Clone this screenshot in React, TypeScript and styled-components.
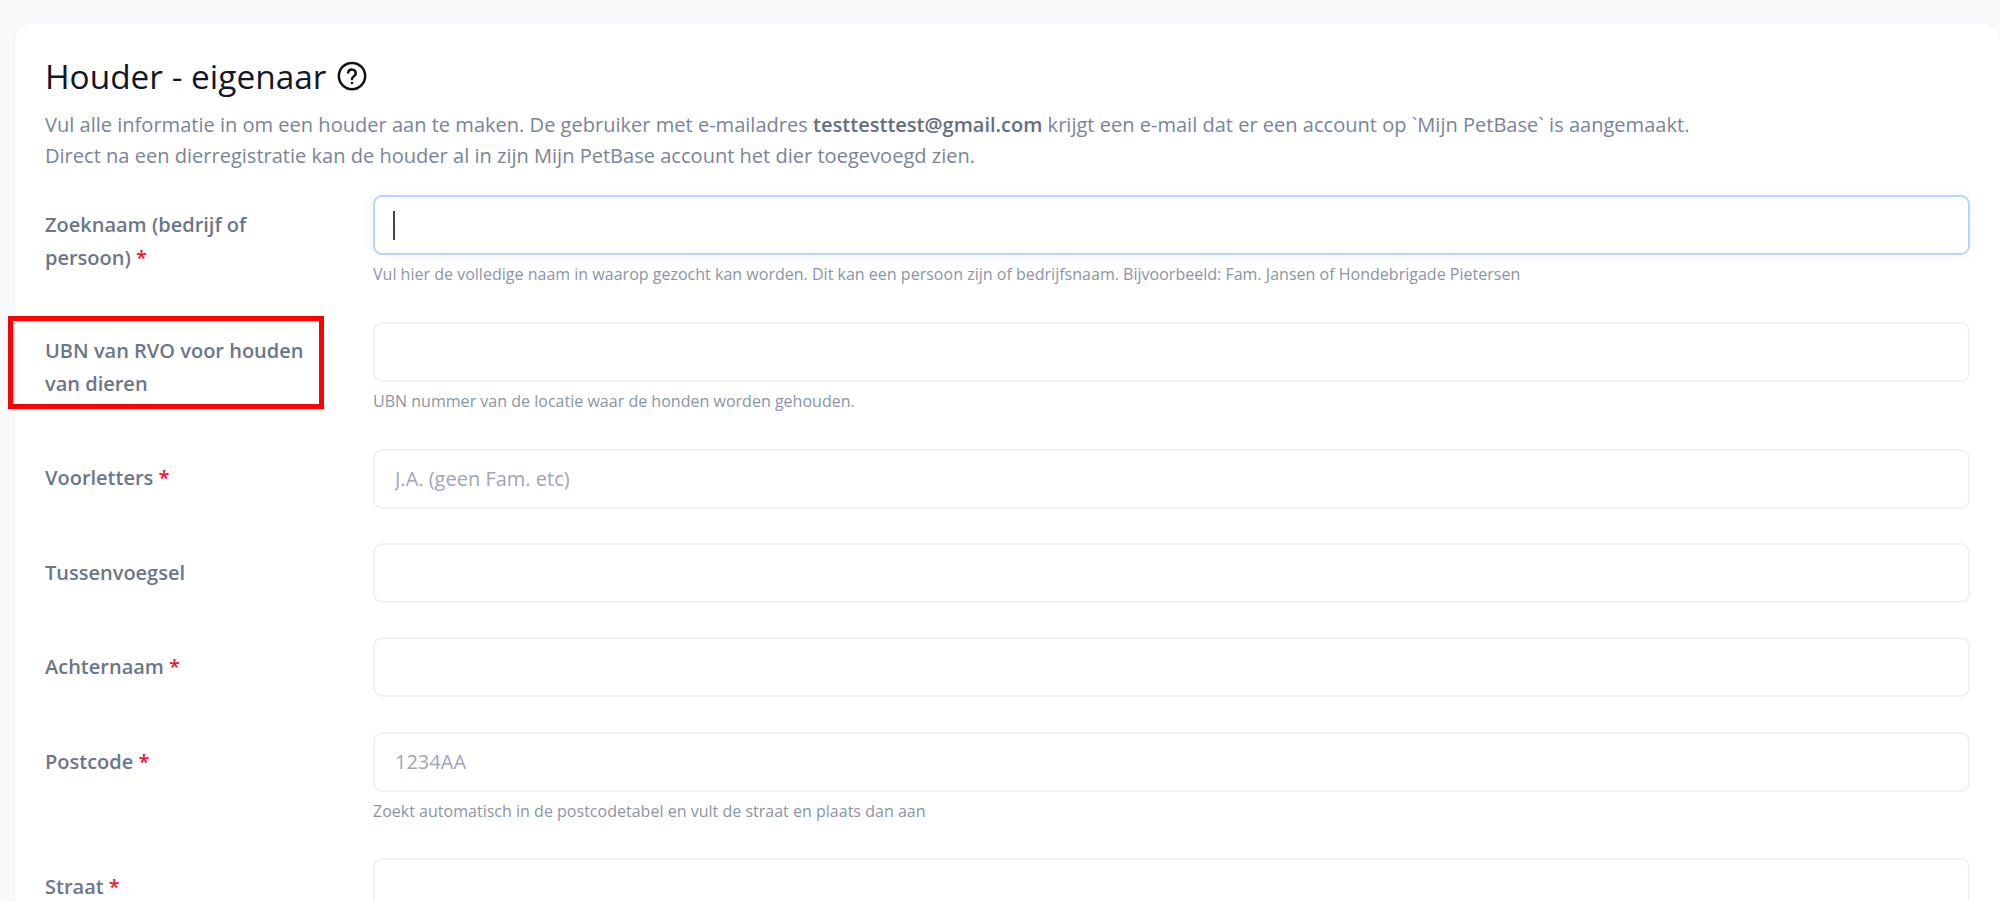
import { createGlobalStyle } from "styled-components";
import styled from "styled-components";

const Global = createGlobalStyle`
    html, body {
        margin: 0;
        height: 100%;
        overflow: hidden;
        background-color: #f8f9fb;
        font-family: "Open Sans", "Noto Sans", sans-serif;
    }
    * {
        box-sizing: border-box;
    }
`;

const Page = styled.div`
    padding: 22px 0 0 14px;
    height: 901px;
    overflow: hidden;
`;

const Card = styled.div`
    background-color: white;
    border: 1px solid #f1f2f7;
    border-right: none;
    border-radius: 20px 20px 0 0;
    padding: 29px 30px 0 30px;
    height: 1200px;
`;

const Title = styled.h1`
    margin: 0;
    display: flex;
    align-items: center;
    column-gap: 11px;
    font-size: 33.4px;
    line-height: 48px;
    font-weight: 500;
    color: #12162a;
`;

const Intro = styled.p`
    margin: 9px 0 0;
    font-size: 20.06px;
    line-height: 31px;
    color: #7b8496;
    b {
        font-weight: 600;
        color: #646e80;
    }
`;

const Form = styled.form`
    margin-top: 24px;
    display: flex;
    flex-direction: column;
`;

const Row = styled.div<{ $gap: number }>`
    display: grid;
    grid-template-columns: 328px 1fr;
    margin-bottom: ${(p) => p.$gap}px;
`;

const Label = styled.label<{ $top: number }>`
    padding-top: ${(p) => p.$top}px;
    width: 280px;
    font-size: 20px;
    line-height: 33px;
    font-weight: 600;
    color: #6c7689;
`;

const Star = styled.span`
    color: #f5102f;
`;

const Input = styled.input<{ $focus?: boolean }>`
    display: block;
    width: 100%;
    height: 60px;
    padding: 0 20px 2px;
    font-family: inherit;
    font-size: 20px;
    color: #181c32;
    background-color: white;
    border: 2px solid ${(p) => (p.$focus ? "#bcd3fd" : "#eff1f6")};
    border-radius: 9px;
    outline: none;
    box-shadow: ${(p) => (p.$focus ? "0 0 12px rgba(188, 211, 253, 0.25)" : "none")};
    &::placeholder {
        color: #a1a5b7;
    }
`;

const Caret = styled.span`
    position: absolute;
    left: 20px;
    top: 16px;
    width: 2px;
    height: 29px;
    background-color: #3f4254;
`;

const Field = styled.div`
    position: relative;
`;

const Help = styled.div`
    margin-top: 9px;
    font-size: 16.05px;
    line-height: 20px;
    color: #8c95a3;
`;

const Marker = styled.div`
    position: absolute;
    left: 8px;
    top: 316px;
    width: 316px;
    height: 93px;
    border: 5px solid #ff0000;
`;

type Item = {
    label: string;
    required?: boolean;
    placeholder?: string;
    help?: string;
    focus?: boolean;
    top: number;
    gap: number;
};

const items: Item[] = [
    {
        label: "Zoeknaam (bedrijf of persoon)",
        required: true,
        focus: true,
        help: "Vul hier de volledige naam in waarop gezocht kan worden. Dit kan een persoon zijn of bedrijfsnaam. Bijvoorbeeld: Fam. Jansen of Hondebrigade Pietersen",
        top: 13,
        gap: 38,
    },
    {
        label: "UBN van RVO voor houden van dieren",
        help: "UBN nummer van de locatie waar de honden worden gehouden.",
        top: 12,
        gap: 38,
    },
    { label: "Voorletters", required: true, placeholder: "J.A. (geen Fam. etc)", top: 12, gap: 34 },
    { label: "Tussenvoegsel", top: 13, gap: 34 },
    { label: "Achternaam", required: true, top: 13, gap: 35 },
    {
        label: "Postcode",
        required: true,
        placeholder: "1234AA",
        help: "Zoekt automatisch in de postcodetabel en vult de straat en plaats dan aan",
        top: 13,
        gap: 37,
    },
    { label: "Straat", required: true, top: 12, gap: 35 },
];

function App() {
    return (
        <Page>
            <Global />
            <Card>
                <Title>
                    Houder - eigenaar
                    <svg width="30" height="30" viewBox="0 0 24 24" fill="none" stroke="#111" strokeWidth="2" strokeLinecap="round" strokeLinejoin="round">
                        <circle cx="12" cy="12" r="10.5" />
                        <path d="M8.9 9.2a3.1 3.1 0 0 1 6.1.8c0 2-3 2.6-3 4.4" />
                        <path d="M12 17.6h.01" />
                    </svg>
                </Title>
                <Intro>
                    Vul alle informatie in om een houder aan te maken. De gebruiker met e-mailadres <b>testtesttest@gmail.com</b> krijgt een e-mail dat er een account op `Mijn PetBase` is aangemaakt.
                    <br />
                    Direct na een dierregistratie kan de houder al in zijn Mijn PetBase account het dier toegevoegd zien.
                </Intro>
                <Form>
                    {items.map((item) => {
                        return (
                            <Row key={item.label} $gap={item.gap}>
                                <Label $top={item.top}>
                                    {item.label}
                                    {item.required && <Star> *</Star>}
                                </Label>
                                <div>
                                    <Field>
                                        <Input $focus={item.focus} placeholder={item.placeholder} />
                                        {item.focus && <Caret />}
                                    </Field>
                                    {item.help && <Help>{item.help}</Help>}
                                </div>
                            </Row>
                        );
                    })}
                </Form>
            </Card>
            <Marker />
        </Page>
    );
}

export default App;
